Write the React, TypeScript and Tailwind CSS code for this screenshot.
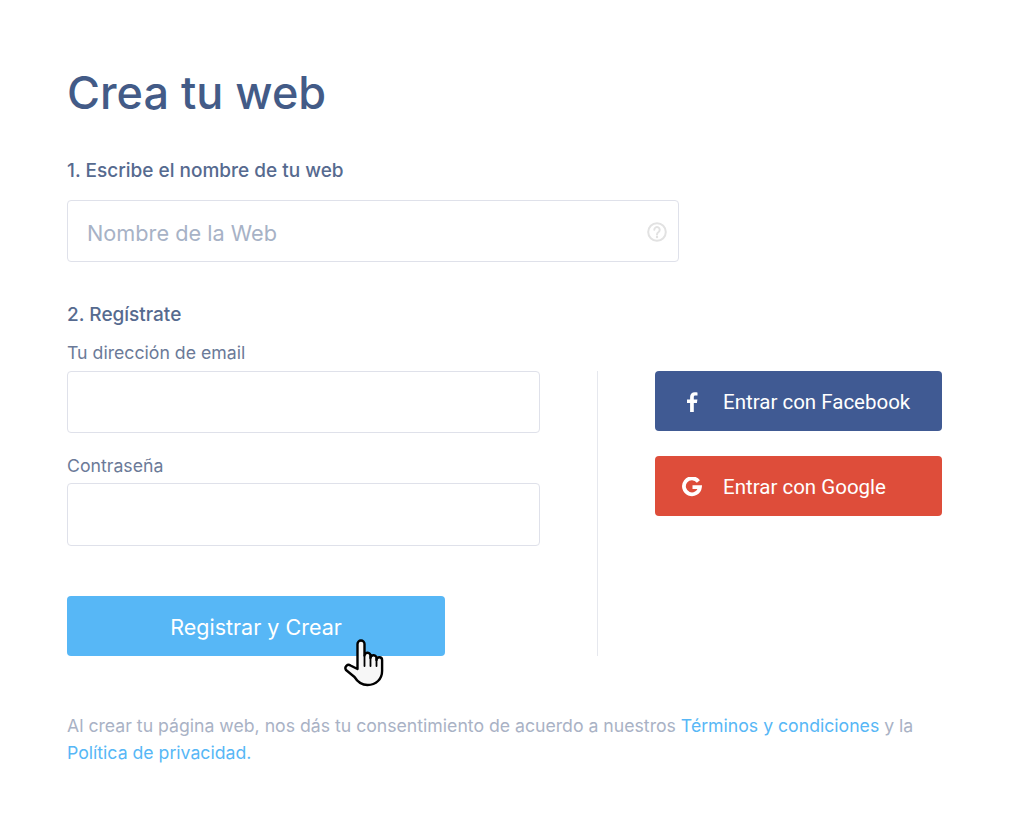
import React from "react";

const field = "block w-full rounded-[4px] border border-[#dfe1ea] bg-white outline-none";

function Hand() {
  return (
    <svg className="absolute left-[276px] top-[42px]" width="42" height="50" viewBox="0 0 42 50" fill="none">
      <path
        d="M14.5 31V6a3.5 3.5 0 0 1 7 0v11.5a3 3 0 0 1 6 .5v2a3 3 0 0 1 6 .5v1.5a2.8 2.8 0 0 1 5.6 0V33c0 8-6 14-14.6 14-6.5 0-10-3.2-13-8L3 32c-2-3 1.5-6.500 4.500-4.500z"
        fill="#f7f7f7"
        stroke="#000"
        strokeWidth="2.400"
        strokeLinejoin="round"
      />
      <path d="M21.500 17.500V28M27.500 18V28M33.500 20.500V28" stroke="#000" strokeWidth="1.800" strokeLinecap="round" />
    </svg>
  );
}

function SocialButton({ color, icon, label }: { color: string; icon: React.ReactNode; label: string }) {
  return (
    <button className={`flex h-[60px] w-[287px] items-center rounded-[4px] text-[20.5px] leading-none text-white ${color}`}>
      <span className="flex w-[68px] justify-center pl-[6px] pt-[2px]">{icon}</span>
      <span className="pt-[2px]">{label}</span>
    </button>
  );
}

export default function App() {
  return (
    <div className="min-h-[825px] bg-white pl-[67px] pt-[64px] font-['Inter','Roboto',sans-serif] text-[#435b87]">
      <h1 className="h-[57px] text-[45px] font-[550] leading-[57px]">Crea tu web</h1>

      <p className="mt-[38px] text-[19px] font-medium leading-[24px] text-[#566a8f]">1. Escribe el nombre de tu web</p>
      <div className="relative mt-[17px] w-[612px]">
        <input
          className={`${field} h-[62px] px-[19px] pt-[3px] text-[21.7px] placeholder:text-[#a7b2c6]`}
          placeholder="Nombre de la Web"
        />
        <svg className="absolute right-[12px] top-[22px]" width="20" height="20" viewBox="0 0 20 20" fill="none">
          <circle cx="10" cy="10" r="8.800" stroke="#e2e2e2" strokeWidth="2" />
          <path d="M7.300 7.800a2.700 2.700 0 1 1 4.300 2.200c-1 .7-1.600 1.200-1.600 2.400" stroke="#e2e2e2" strokeWidth="2" strokeLinecap="round" />
          <circle cx="10" cy="15" r="1.200" fill="#e2e2e2" />
        </svg>
      </div>

      <p className="mt-[41px] text-[19px] font-medium leading-[24px] text-[#566a8f]">2. Regístrate</p>

      <div className="mt-[14px] flex">
        <div className="w-[473px]">
          <label className="block text-[17.7px] leading-[24px] text-[#6b7a98]">Tu dirección de email</label>
          <input className={`${field} mt-[6px] h-[62px]`} />
          <label className="mt-[21px] block text-[17.7px] leading-[24px] text-[#6b7a98]">Contraseña</label>
          <input className={`${field} mt-[5px] h-[63px]`} />
          <div className="relative mt-[50px] h-[60px]">
            <button className="h-[60px] w-[378px] rounded-[4px] bg-[#57b7f6] pt-[3px] text-[21.5px] leading-none text-white">
              Registrar y Crear
            </button>
            <Hand />
          </div>
        </div>

        <div className="ml-[57px] mt-[30px] h-[285px] w-px bg-[#e6e8ee]" />

        <div className="ml-[57px] mt-[30px] flex flex-col gap-[25px] font-['Roboto',sans-serif]">
          <SocialButton
            color="bg-[#405a93]"
            label="Entrar con Facebook"
            icon={
              <svg width="12" height="20" viewBox="0 0 12 20" fill="#fff">
                <path d="M7.800 20v-9h3.100l.5-3.500H7.800V5.300c0-1 .3-1.700 1.800-1.700h1.900V.4C11.200.3 10 .2 8.800.2 6 .2 4.100 1.900 4.100 5v2.500H1V11h3.100v9z" />
              </svg>
            }
          />
          <SocialButton
            color="bg-[#de4d3a]"
            label="Entrar con Google"
            icon={
              <svg width="20" height="20" viewBox="0 0 20 20" fill="none">
                <path
                  d="M16.400 4.500A8 8 0 1 0 17.900 10.200H10.500"
                  stroke="#fff"
                  strokeWidth="3.800"
                />
              </svg>
            }
          />
        </div>
      </div>

      <p className="mt-[56px] w-[880px] text-[17.66px] leading-[27px] text-[#a9b2c5]">
        Al crear tu página web, nos dás tu consentimiento de acuerdo a nuestros{" "}
        <a className="text-[#57b7f6]">Términos y condiciones</a> y la{" "}
        <a className="text-[#57b7f6]">Política de privacidad.</a>
      </p>
    </div>
  );
}
